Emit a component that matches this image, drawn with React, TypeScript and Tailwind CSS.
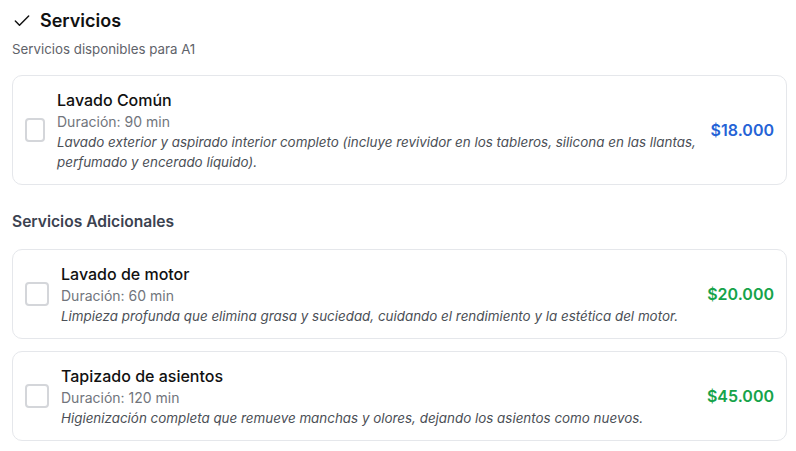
import React from "react";
import { Check } from "lucide-react";

type Item = {
  title: string;
  duration: string;
  desc: string;
  price: string;
  color: string;
  boxW: string;
};

function ServiceCard({ item }: { item: Item }) {
  return (
    <label className="flex items-center gap-3 rounded-[10px] border border-[#e5e7eb] bg-white p-3">
      <span
        className={`${item.boxW} h-6 shrink-0 rounded-[4px] border-2 border-[#d4d6da] bg-white`}
      />
      <div className="min-w-0 flex-1">
        <div className="text-base leading-6 font-medium text-[#111111]">{item.title}</div>
        <div className="text-sm leading-5 text-[#71757c]">{item.duration}</div>
        <div className="text-[13.4px] leading-5 italic text-[#4b4f56]">{item.desc}</div>
      </div>
      <div className={`shrink-0 text-base font-semibold ${item.color}`}>{item.price}</div>
    </label>
  );
}

export default function App() {
  const main: Item = {
    title: "Lavado Común",
    duration: "Duración: 90 min",
    desc:
      "Lavado exterior y aspirado interior completo (incluye revividor en los tableros, silicona en las llantas, perfumado y encerado líquido).",
    price: "$18.000",
    color: "text-[#2563d6]",
    boxW: "w-5",
  };
  const extras: Item[] = [
    {
      title: "Lavado de motor",
      duration: "Duración: 60 min",
      desc: "Limpieza profunda que elimina grasa y suciedad, cuidando el rendimiento y la estética del motor.",
      price: "$20.000",
      color: "text-[#16a34a]",
      boxW: "w-6",
    },
    {
      title: "Tapizado de asientos",
      duration: "Duración: 120 min",
      desc: "Higienización completa que remueve manchas y olores, dejando los asientos como nuevos.",
      price: "$45.000",
      color: "text-[#16a34a]",
      boxW: "w-6",
    },
  ];
  return (
    <div
      className="min-h-[451px] w-[796px] bg-white pl-3 pr-[9px] pt-[7px] text-[#111111]"
      style={{ fontFamily: "Inter, 'Noto Sans', sans-serif" }}
    >
      <div className="flex h-7 items-center gap-2">
        <Check size={20} strokeWidth={1.75} className="text-[#111111]" />
        <h2 className="text-lg leading-7 font-semibold">Servicios</h2>
      </div>
      <p className="mt-1 text-[13.3px] leading-5 text-[#5f636a]">Servicios disponibles para A1</p>
      <div className="mt-4">
        <ServiceCard item={main} />
      </div>
      <h3 className="mt-[25px] text-[15.6px] leading-6 font-semibold text-[#3b4250]">Servicios Adicionales</h3>
      <div className="mt-[15px] flex flex-col gap-3">
        {extras.map((e) => (
          <ServiceCard key={e.title} item={e} />
        ))}
      </div>
    </div>
  );
}
